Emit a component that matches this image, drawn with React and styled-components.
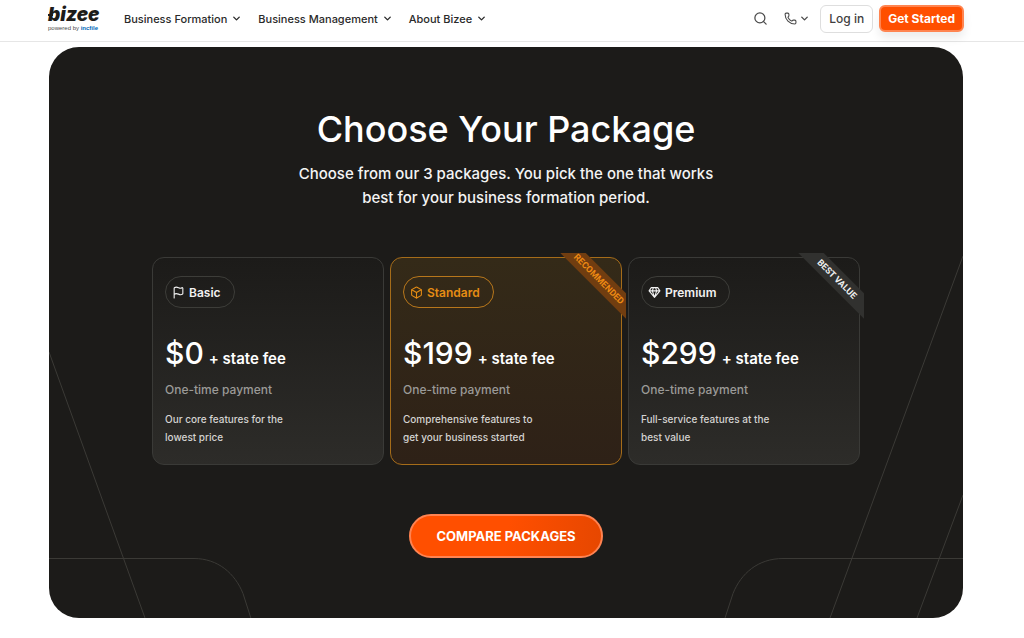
import React from 'react';
import styled, { createGlobalStyle, css } from 'styled-components';
import { Box, ChevronDown, Flag, Phone, Search } from 'lucide-react';

const GlobalStyle = createGlobalStyle`
  * {
    box-sizing: border-box;
  }

  body {
    margin: 0;
    background: #ffffff;
    color: #1d1c1a;
    font-family: Inter, 'Liberation Sans', sans-serif;
  }

  button {
    font-family: inherit;
    cursor: pointer;
  }
`;

const Header = styled.header`
  display: flex;
  align-items: center;
  height: 42px;
  padding: 0 60px 4px 48px;
  border-bottom: 1px solid #e6e6e6;
`;

const LogoLink = styled.a`
  position: relative;
  display: flex;
  flex-direction: column;
  width: 52px;
  margin-right: 24px;
  color: #1d1c1a;
  text-decoration: none;

  /* crossbar on the stem of the b */
  &::before {
    content: '';
    position: absolute;
    top: 8px;
    left: 0;
    width: 5px;
    height: 2px;
    background: #1d1c1a;
  }
`;

const Wordmark = styled.span`
  font-size: 19px;
  line-height: 18px;
  font-weight: 900;
  font-style: italic;
`;

const PoweredBy = styled.small`
  font-family: 'Liberation Sans', sans-serif;
  font-size: 6px;
  line-height: 8px;
  color: #4a4a4a;
  white-space: nowrap;

  strong {
    color: #0067b8;
  }
`;

const Nav = styled.nav`
  display: flex;
  gap: 16px;
  flex: 1;
`;

const NavButton = styled.button`
  display: flex;
  align-items: center;
  gap: 4px;
  padding: 0;
  border: 0;
  background: none;
  color: #2a2a2a;
  font-size: 11px;
  line-height: 16px;
  font-weight: 500;
  white-space: nowrap;
`;

const Actions = styled.div`
  display: flex;
  align-items: center;
  gap: 6px;
`;

const IconButton = styled.button`
  display: flex;
  align-items: center;
  gap: 2px;
  margin-right: ${(props) => (props.$menu ? '4px' : '10px')};
  padding: 0;
  border: 0;
  background: none;
  color: #4a4a4a;
`;

const LoginButton = styled.button`
  height: 28px;
  padding: 0 8px;
  border: 1px solid #dedede;
  border-radius: 6px;
  background: #ffffff;
  color: #3f3f3f;
  font-size: 12px;
  font-weight: 500;
`;

const StartButton = styled.button`
  height: 27px;
  padding: 0 7px;
  border: 2px solid #ff8450;
  border-radius: 6px;
  background: #ff4f00;
  box-shadow: 0 6px 10px rgba(0, 0, 0, 0.08);
  color: #ffffff;
  font-size: 12px;
  font-weight: 700;
`;

const Panel = styled.main`
  position: relative;
  display: flex;
  flex-direction: column;
  align-items: center;
  margin: 5px 61px 20px 49px;
  padding: 59px 20px 60px;
  border-radius: 30px;
  background: #1c1b19;
  color: #ffffff;
  overflow: hidden;
`;

const Lines = styled.svg`
  position: absolute;
  bottom: 0;
  ${(props) => props.$side}: 0;
  width: 240px;
  height: 380px;
  fill: none;
  stroke: #3b3a36;
`;

const Title = styled.h1`
  margin: 0;
  font-size: 36px;
  line-height: 46px;
  font-weight: 500;
`;

const Lead = styled.p`
  max-width: 440px;
  margin: 10px 0 47px;
  color: #f4f4f4;
  font-size: 15px;
  line-height: 24px;
  font-weight: 500;
  text-align: center;
`;

const Packages = styled.div`
  position: relative;
  display: grid;
  grid-template-columns: repeat(3, 1fr);
  gap: 6px;
  width: 100%;
  max-width: 708px;
`;

const Card = styled.article`
  position: relative;
  padding: 18px 12px;
  border: 1px solid #3a3a37;
  border-radius: 12px;
  background: linear-gradient(#1c1b19, #2d2c29);

  ${(props) =>
    props.$featured &&
    css`
      border-color: #a56c19;
      background: linear-gradient(#342a18, #2e2117);
    `}
`;

const Badge = styled.h2`
  display: inline-flex;
  align-items: center;
  gap: 4px;
  height: 32px;
  margin: 0 0 25px;
  padding: 0 13px 0 6px;
  border: 1px solid ${(props) => (props.$featured ? '#b8771b' : '#3d3d39')};
  border-radius: 16px;
  color: ${(props) => (props.$featured ? '#e58c14' : '#f1f1f1')};
  font-size: 12px;
  font-weight: 600;
`;

const Price = styled.p`
  display: flex;
  align-items: baseline;
  gap: 5px;
  margin: 0;
  font-size: 30px;
  line-height: 40px;
  font-weight: 500;
`;

const Fee = styled.span`
  font-size: 15px;
  line-height: 20px;
  font-weight: 600;
`;

const Term = styled.p`
  margin: 9px 0 12px;
  color: #9b9a97;
  font-size: 12px;
  line-height: 16px;
  font-weight: 500;
`;

const Description = styled.p`
  max-width: 140px;
  margin: 0;
  color: #d4d3d1;
  font-size: 10px;
  line-height: 18px;
  font-weight: 500;
`;

const RibbonCorner = styled.div`
  position: absolute;
  top: -5px;
  right: -5px;
  width: 68px;
  height: 67px;
  overflow: hidden;
`;

const Ribbon = styled.span`
  position: absolute;
  top: 17px;
  left: -17px;
  width: 116px;
  background: ${(props) => (props.$featured ? '#713d10' : '#31312f')};
  color: ${(props) => (props.$featured ? '#ee8a13' : '#f0f0f0')};
  font-family: Roboto, sans-serif;
  font-size: 9px;
  line-height: 18px;
  font-weight: 700;
  text-align: center;
  transform: rotate(45deg);
`;

const CompareButton = styled.button`
  position: relative;
  height: 44px;
  margin-top: 49px;
  padding: 0 25px;
  border: 2px solid #ff8351;
  border-radius: 22px;
  background: linear-gradient(100deg, #ff4f00 50%, #e64700);
  color: #ffffff;
  font-size: 13px;
  font-weight: 700;
`;

function Diamond({ size }) {
  return (
    <svg width={size} height={size} viewBox="0 0 24 24" fill="none" stroke="currentColor" strokeWidth="2" strokeLinejoin="round">
      <path d="M6 3h12l4 6-10 12L2 9zM2 9h20M10 3 8 9l4 12 4-12-2-6" />
    </svg>
  );
}

const menus = ['Business Formation', 'Business Management', 'About Bizee'];

const packages = [
  {
    name: 'Basic',
    Icon: Flag,
    price: '$0',
    description: 'Our core features for the lowest price',
  },
  {
    name: 'Standard',
    Icon: Box,
    price: '$199',
    description: 'Comprehensive features to get your business started',
    ribbon: 'RECOMMENDED',
    featured: true,
  },
  {
    name: 'Premium',
    Icon: Diamond,
    price: '$299',
    description: 'Full-service features at the best value',
    ribbon: 'BEST VALUE',
  },
];

const PackageCard = ({ item }) => {
  const { name, Icon, price, description, ribbon, featured } = item;

  return (
    <Card $featured={featured}>
      <Badge $featured={featured}>
        <Icon size={13} />
        {name}
      </Badge>
      <Price>
        {price} <Fee>+ state fee</Fee>
      </Price>
      <Term>One-time payment</Term>
      <Description>{description}</Description>
      {ribbon && (
        <RibbonCorner>
          <Ribbon $featured={featured}>{ribbon}</Ribbon>
        </RibbonCorner>
      )}
    </Card>
  );
};

const App = () => (
  <>
    <GlobalStyle />
    <Header>
      <LogoLink href="#">
        <Wordmark>bizee</Wordmark>
        <PoweredBy>
          powered by <strong>incfile</strong>
        </PoweredBy>
      </LogoLink>
      <Nav>
        {menus.map((label) => (
          <NavButton key={label} type="button">
            {label}
            <ChevronDown size={11} strokeWidth={3} />
          </NavButton>
        ))}
      </Nav>
      <Actions>
        <IconButton type="button" aria-label="Search">
          <Search size={15} />
        </IconButton>
        <IconButton $menu type="button" aria-label="Call us">
          <Phone size={13} />
          <ChevronDown size={11} strokeWidth={3} />
        </IconButton>
        <LoginButton type="button">Log in</LoginButton>
        <StartButton type="button">Get Started</StartButton>
      </Actions>
    </Header>
    <Panel>
      <Lines $side="left" viewBox="0 0 240 380" aria-hidden="true">
        <path d="M0 114 96 380M0 320.5h145c24 0 41 15 49 35l8 25" />
      </Lines>
      <Lines $side="right" viewBox="0 0 240 380" aria-hidden="true">
        <path d="M240 18 107 380M240 257 194 380M240 320.5H60c-25 0-42 15-50 35L2 380" />
      </Lines>
      <Title>Choose Your Package</Title>
      <Lead>Choose from our 3 packages. You pick the one that works best for your business formation period.</Lead>
      <Packages>
        {packages.map((item) => (
          <PackageCard key={item.name} item={item} />
        ))}
      </Packages>
      <CompareButton type="button">COMPARE PACKAGES</CompareButton>
    </Panel>
  </>
);

export default App;
